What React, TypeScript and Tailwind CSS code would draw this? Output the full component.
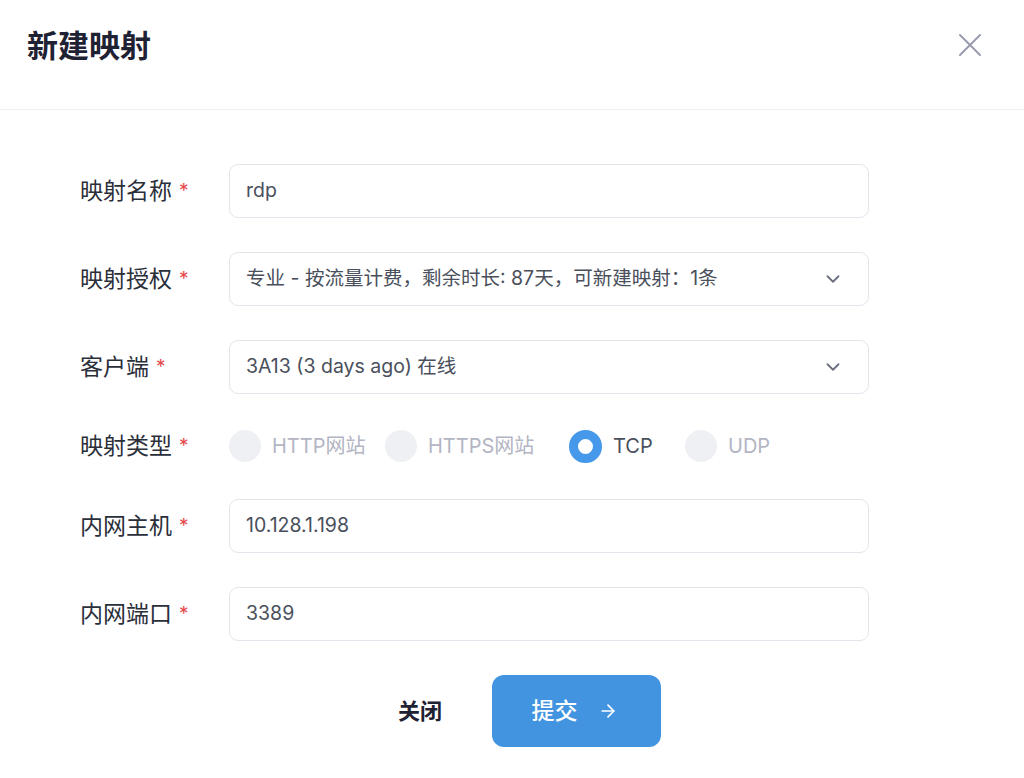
import { ChevronDown, X, ArrowRight } from "lucide-react";

const font = { fontFamily: 'Inter, "Noto Sans CJK SC", sans-serif' };

// Form label with red required mark
const Label = ({ text }: { text: string }) => (
    <div className="w-[149px] shrink-0 flex items-center text-[23px] text-[#2b2f3a]">
        <span>{text}</span>
        <span className="ml-[7px] text-[#e5484d] text-[19px]">*</span>
    </div>
);

const TextField = ({ value }: { value: string }) => (
    <div className="w-[640px] h-[54px] rounded-[9px] border border-[#e3e5ec] bg-white flex items-center px-[16px] text-[19.5px] text-[#4a4f5c]">
        {value}
    </div>
);

const SelectField = ({ value }: { value: string }) => (
    <div className="w-[640px] h-[54px] rounded-[9px] border border-[#e3e5ec] bg-white flex items-center justify-between pl-[16px] pr-[24px] text-[19.5px] text-[#4a4f5c]">
        <span>{value}</span>
        <ChevronDown size={22} strokeWidth={2} className="text-[#6b7080]" />
    </div>
);

type RadioItem = { label: string; checked: boolean; width: string };

const radios: RadioItem[] = [
    { label: "HTTP网站", checked: false, width: "w-[156px]" },
    { label: "HTTPS网站", checked: false, width: "w-[184px]" },
    { label: "TCP", checked: true, width: "w-[116px]" },
    { label: "UDP", checked: false, width: "w-[116px]" },
];

export default function App() {
    return (
        <div className="w-[1024px] h-[778px] bg-white overflow-hidden" style={font}>
            <div className="h-[110px] border-b border-[#eef0f3] flex items-start justify-between pl-[27px] pr-[34px] pt-[25px]">
                <h2 className="text-[31px] leading-[42px] font-bold text-[#1f2233]">新建映射</h2>
                <X size={40} strokeWidth={1.2} className="text-[#989bae]" />
            </div>

            <div className="pl-[80px]">
                <div className="flex items-center mt-[54px]">
                    <Label text="映射名称" />
                    <TextField value="rdp" />
                </div>
                <div className="flex items-center mt-[34px]">
                    <Label text="映射授权" />
                    <SelectField value="专业 - 按流量计费，剩余时长: 87天，可新建映射：1条" />
                </div>
                <div className="flex items-center mt-[34px]">
                    <Label text="客户端" />
                    <SelectField value="3A13 (3 days ago) 在线" />
                </div>
                <div className="flex items-center h-[54px] mt-[25px]">
                    <Label text="映射类型" />
                    <div className="flex items-center">
                        {radios.map((r) => (
                            <div key={r.label} className={`${r.width} flex items-center`}>
                                {r.checked ? (
                                    <div className="w-[33px] h-[33px] rounded-full border-[9px] border-[#4598ea] bg-white" />
                                ) : (
                                    <div className="w-[32px] h-[32px] rounded-full bg-[#eff0f4]" />
                                )}
                                <span
                                    className={`ml-[11px] text-[20px] ${r.checked ? "text-[#4a4f5c]" : "text-[#b3b5c3]"}`}
                                >
                                    {r.label}
                                </span>
                            </div>
                        ))}
                    </div>
                </div>
                <div className="flex items-center mt-[26px]">
                    <Label text="内网主机" />
                    <TextField value="10.128.1.198" />
                </div>
                <div className="flex items-center mt-[34px]">
                    <Label text="内网端口" />
                    <TextField value="3389" />
                </div>
            </div>

            <div className="flex items-center justify-center mt-[34px] pl-[29px]">
                <button className="text-[22px] font-semibold text-[#1f2233] px-[6px]">关闭</button>
                <button className="ml-[44px] w-[169px] h-[72px] rounded-[12px] bg-[#4394e0] flex items-center justify-center gap-[20px] pr-[4px] text-white">
                    <span className="text-[23px] font-medium">提交</span>
                    <ArrowRight size={20} strokeWidth={2} />
                </button>
            </div>
        </div>
    );
}
